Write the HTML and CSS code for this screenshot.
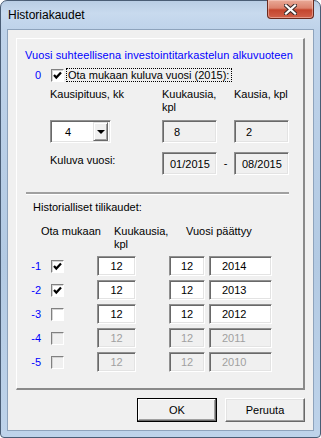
FILE: index.html
```html
<!DOCTYPE html>
<html lang="fi">
<head>
    <meta charset="UTF-8">
    <title>Historiakaudet</title>
    <link rel="stylesheet" href="styles.css">
</head>
<body>
    <div class="window">
        <div class="titlebar">
            <span class="title">Historiakaudet</span>
            <div class="close">
                <svg width="13" height="11" viewBox="0 0 13 11">
                    <path d="M2 1.5 L11 9.5 M11 1.5 L2 9.5" stroke="#3b2a2a" stroke-width="4.2" stroke-linecap="square" fill="none"/>
                    <path d="M2 1.5 L11 9.5 M11 1.5 L2 9.5" stroke="#fff" stroke-width="2.2" stroke-linecap="square" fill="none"/>
                </svg>
            </div>
        </div>

        <div class="client">
            <div class="panel">
                <div class="heading">Vuosi suhteellisena investointitarkastelun alkuvuoteen</div>

                <div class="row0">
                    <span class="idx">0</span>
                    <span class="check">
                        <svg width="11" height="11" viewBox="0 0 11 11"><path d="M2 5 L4.3 7.6 L9 2.4" stroke="#000" stroke-width="2.2" fill="none"/></svg>
                    </span>
                    <span class="focus">Ota mukaan kuluva vuosi (2015):</span>
                </div>

                <div class="cols">
                    <span class="cell1">Kausipituus, kk</span>
                    <span class="cell2">Kuukausia,<br>kpl</span>
                    <span class="cell3">Kausia, kpl</span>
                </div>

                <div class="fields">
                    <div class="cell1">
                        <div class="combo">
                            <span class="combo-value">4</span>
                            <span class="drop"><span class="arrow"></span></span>
                        </div>
                    </div>
                    <div class="cell2"><div class="box ro">8</div></div>
                    <div class="cell3"><div class="box ro">2</div></div>
                </div>

                <div class="fields current">
                    <div class="cell1 lbl">Kuluva vuosi:</div>
                    <div class="cell2">
                        <div class="box ro date">01/2015</div>
                        <span class="dash">-</span>
                    </div>
                    <div class="cell3"><div class="box ro date">08/2015</div></div>
                </div>

                <div class="sep"></div>

                <div class="subhead">Historialliset tilikaudet:</div>

                <div class="hcols">
                    <span class="h1">Ota mukaan</span>
                    <span class="h2">Kuukausia,<br>kpl</span>
                    <span class="h3">Vuosi päättyy</span>
                </div>

                <div class="hrow">
                    <span class="idx">-1</span>
                    <span class="check"><svg width="11" height="11" viewBox="0 0 11 11"><path d="M2 5 L4.3 7.6 L9 2.4" stroke="#000" stroke-width="2.2" fill="none"/></svg></span>
                    <div class="box b1">12</div>
                    <div class="box b2">12</div>
                    <div class="box b3">2014</div>
                </div>
                <div class="hrow">
                    <span class="idx">-2</span>
                    <span class="check"><svg width="11" height="11" viewBox="0 0 11 11"><path d="M2 5 L4.3 7.6 L9 2.4" stroke="#000" stroke-width="2.2" fill="none"/></svg></span>
                    <div class="box b1">12</div>
                    <div class="box b2">12</div>
                    <div class="box b3">2013</div>
                </div>
                <div class="hrow">
                    <span class="idx">-3</span>
                    <span class="check"></span>
                    <div class="box b1">12</div>
                    <div class="box b2">12</div>
                    <div class="box b3">2012</div>
                </div>
                <div class="hrow disabled">
                    <span class="idx">-4</span>
                    <span class="check"></span>
                    <div class="box b1">12</div>
                    <div class="box b2">12</div>
                    <div class="box b3">2011</div>
                </div>
                <div class="hrow disabled">
                    <span class="idx">-5</span>
                    <span class="check"></span>
                    <div class="box b1">12</div>
                    <div class="box b2">12</div>
                    <div class="box b3">2010</div>
                </div>
            </div>

            <div class="buttons">
                <button class="btn default">OK</button>
                <button class="btn">Peruuta</button>
            </div>
        </div>
    </div>
</body>
</html>
```

FILE: styles.css
```css
body {
    margin: 0;
    font-family: "Liberation Sans", Arial, sans-serif;
    font-size: 11px;
    color: #000;
    background: #fff;
}

.window {
    width: 321px;
    height: 438px;
    box-sizing: border-box;
    border: 1px solid #4a5d75;
    border-radius: 7px 7px 4px 4px;
    padding: 0 6px 6px 6px;
    background: linear-gradient(180deg, #b9cde4 0, #c8daee 12px, #bfd3ea 28px, #b3cae3 60%, #bed3ea 100%);
    display: flex;
    flex-direction: column;
}

.titlebar {
    height: 28px;
    display: flex;
    justify-content: space-between;
    align-items: flex-start;
}

.title {
    padding: 6px 0 0 1px;
    font-size: 12px;
    line-height: 16px;
    color: #000;
}

.close {
    width: 47px;
    height: 19px;
    margin-top: -1px;
    box-sizing: border-box;
    border: 1px solid #6a2a1e;
    border-top: none;
    border-radius: 0 0 4px 4px;
    background: linear-gradient(180deg, #e9aa98 0, #dc826d 45%, #c4452d 55%, #d1614a 100%);
    box-shadow: inset 0 0 0 1px rgba(255, 220, 210, 0.45);
    display: flex;
    justify-content: center;
    align-items: center;
}

.client {
    height: 402px;
    box-sizing: border-box;
    border: 1px solid #8ea3bc;
    background: #f0f0f0;
    padding: 8px 8px 0 8px;
}

/* main group frame */
.panel {
    height: 352px;
    box-sizing: border-box;
    border-top: 1px solid #fff;
    border-left: 1px solid #fff;
    border-right: 2px solid #8a8a8a;
    border-bottom: 2px solid #8a8a8a;
    padding-top: 9px;
}

.heading {
    padding-left: 8px;
    line-height: 14px;
    letter-spacing: 0.1px;
    color: #0000ff;
}

.idx {
    width: 10px;
    margin-left: 14px;
    margin-right: 10px;
    text-align: right;
    color: #0000ff;
}

.check {
    width: 13px;
    height: 13px;
    box-sizing: border-box;
    border: 1px solid;
    border-color: #808080 #fff #fff #808080;
    box-shadow: inset 1px 1px 0 #d4d4d4;
    background: #fff;
    display: flex;
    align-items: center;
    justify-content: center;
}

.row0 {
    margin-top: 6px;
    height: 14px;
    display: flex;
    align-items: center;
}

.focus {
    margin-left: 2px;
    padding: 0 2px 0 1px;
    border: 1px dotted #000;
    line-height: 12px;
}

.cols {
    margin-top: 6px;
    display: flex;
    line-height: 13px;
}

.cell1 {
    width: 112px;
    margin-left: 33px;
    flex-shrink: 0;
}

.cell2 {
    width: 72px;
    flex-shrink: 0;
    display: flex;
}

.fields {
    margin-top: 6px;
    display: flex;
    height: 23px;
}

.fields.current {
    margin-top: 9px;
}

.lbl {
    padding-top: 1px;
    line-height: 14px;
}

.box {
    box-sizing: border-box;
    border: 1px solid;
    border-color: #909090 #fff #fff #909090;
    box-shadow: inset 1px 1px 0 #696969, inset -1px -1px 0 #e3e3e3;
    background: #fff;
    display: flex;
    align-items: center;
}

.box.ro {
    width: 55px;
    height: 23px;
    background: #f0f0f0;
    padding-left: 11px;
}

.box.date {
    padding-left: 7px;
}

.dash {
    width: 17px;
    text-align: center;
    line-height: 23px;
}

.combo {
    width: 61px;
    height: 23px;
    box-sizing: border-box;
    border: 1px solid;
    border-color: #909090 #fff #fff #909090;
    box-shadow: inset 1px 1px 0 #696969, inset -1px -1px 0 #e3e3e3;
    background: #fff;
    display: flex;
    align-items: center;
    padding: 0 2px 0 14px;
}

.combo-value {
    flex: 1;
}

.drop {
    width: 15px;
    height: 19px;
    box-sizing: border-box;
    background: #f0f0f0;
    border: 1px solid;
    border-color: #e3e3e3 #696969 #696969 #e3e3e3;
    box-shadow: inset 1px 1px 0 #fff, inset -1px -1px 0 #a0a0a0;
    display: flex;
    align-items: center;
    justify-content: center;
}

.arrow {
    width: 0;
    height: 0;
    border-left: 4px solid transparent;
    border-right: 4px solid transparent;
    border-top: 4px solid #000;
}

.sep {
    margin: 17px 0 0 9px;
    width: 263px;
    height: 2px;
    background: #a0a0a0;
    border-bottom: 1px solid #fff;
}

.subhead {
    margin-top: 5px;
    padding-left: 16px;
    line-height: 14px;
}

.hcols {
    margin-top: 11px;
    display: flex;
    line-height: 13px;
}

.h1 {
    margin-left: 24px;
    width: 73px;
}

.h2 {
    width: 72px;
}

.hrow {
    margin-top: 5px;
    height: 20px;
    display: flex;
    align-items: center;
}

.hrow + .hrow {
    margin-top: 4px;
}

.hrow .box {
    height: 20px;
    justify-content: center;
}

.b1 {
    width: 39px;
    margin-left: 33px;
}

.b2 {
    width: 36px;
    margin-left: 33px;
}

.b3 {
    width: 63px;
    margin-left: 4px;
    justify-content: flex-start !important;
    padding-left: 12px;
}

.hrow.disabled .box {
    background: #f0f0f0;
    color: #a0a0a0;
}

.hrow.disabled .check {
    background: #f0f0f0;
}

.buttons {
    margin-top: 8px;
    display: flex;
    justify-content: flex-end;
    gap: 8px;
}

.btn {
    width: 80px;
    height: 24px;
    box-sizing: border-box;
    font-family: "Liberation Sans", Arial, sans-serif;
    font-size: 11px;
    color: #000;
    background: #f0f0f0;
    border: 1px solid;
    border-color: #fff #696969 #696969 #fff;
    box-shadow: inset -1px -1px 0 #a0a0a0, inset 1px 1px 0 #e3e3e3;
    padding: 0;
}

.btn.default {
    border: 1px solid #000;
    box-shadow: inset -1px -1px 0 #696969, inset 1px 1px 0 #fff, inset -2px -2px 0 #a0a0a0;
}
```
